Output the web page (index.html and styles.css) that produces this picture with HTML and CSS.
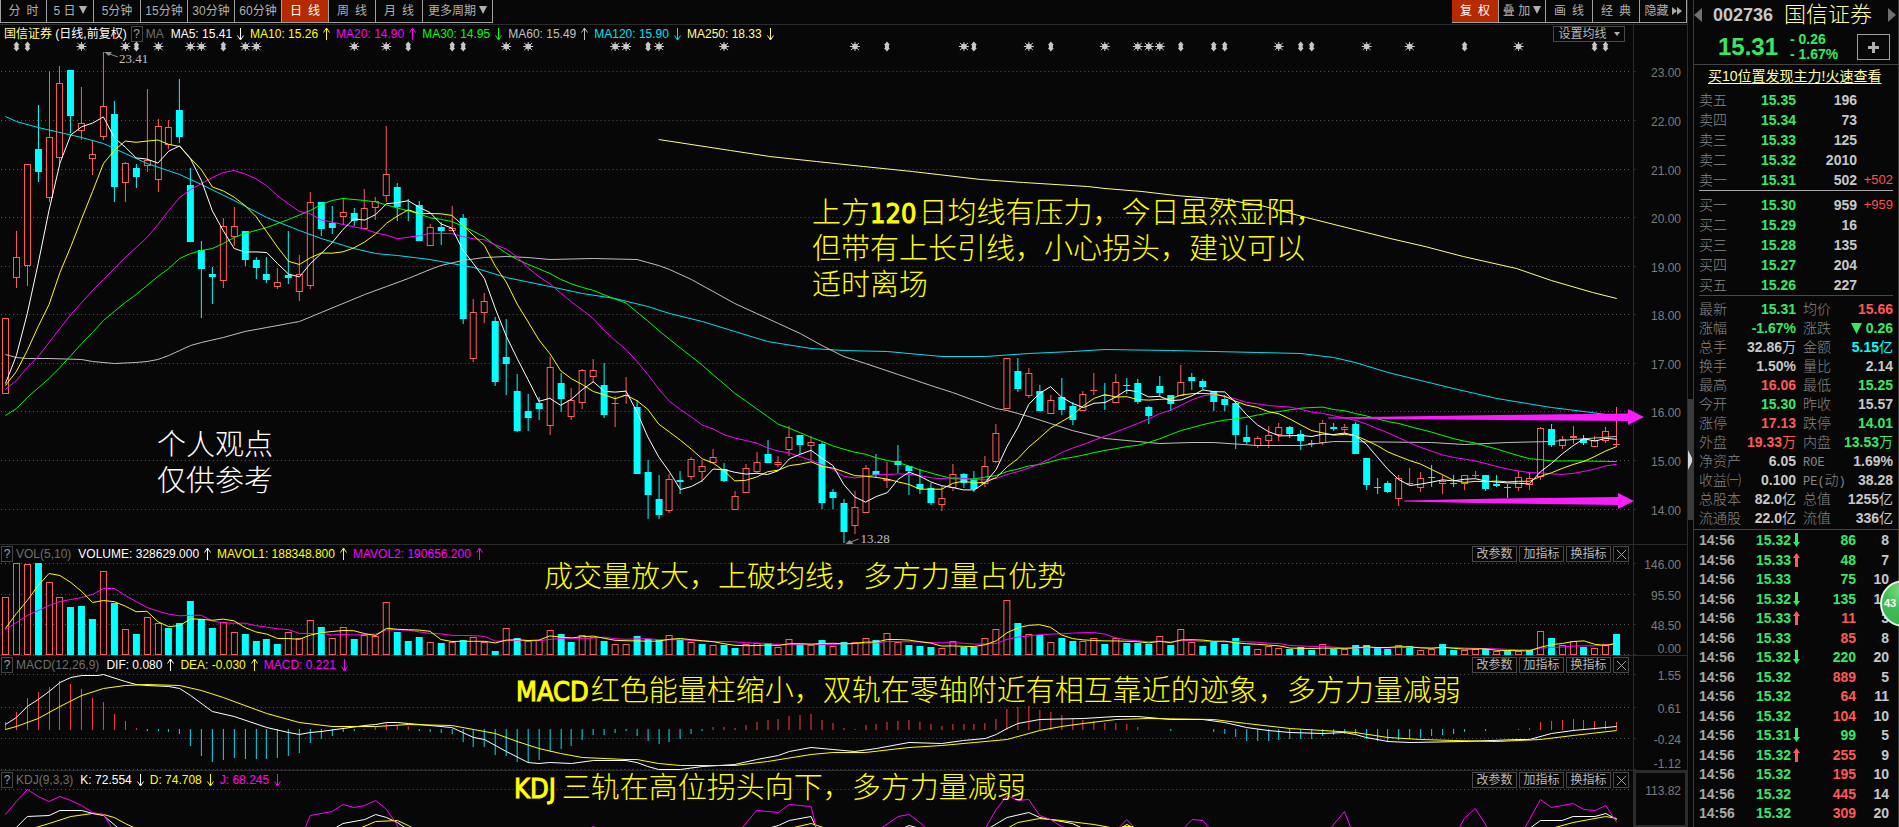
FILE: index.html
```html
<!DOCTYPE html>
<html lang="zh-CN">
<head>
<meta charset="utf-8">
<title>国信证券 002736</title>
<link rel="stylesheet" href="styles.css">
</head>
<body>
<svg class="defs" aria-hidden="true">
  <symbol id="up" viewBox="0 0 7 14"><path d="M3.5 13V2M.5 5.500L3.500 1L6.500 5.500"/></symbol>
  <symbol id="down" viewBox="0 0 7 14"><path d="M3.500 1V12M.5 8.500L3.500 13L6.500 8.500"/></symbol>
  <symbol id="tick-up" viewBox="0 0 7 14"><path d="M3.500 0L7 5H5V14H2V5H0Z"/></symbol>
  <symbol id="tick-down" viewBox="0 0 7 14"><path d="M2 0H5V9H7L3.500 14L0 9H2Z"/></symbol>
  <symbol id="cross" viewBox="0 0 12 12"><path d="M1 1L11 11M11 1L1 11"/></symbol>
  <symbol id="drop" viewBox="0 0 10 10"><path d="M0 0H10L5 10Z"/></symbol>
</svg>
<div class="app">
  <main class="chart">
    <nav class="toolbar">
      <button class="tab">分&ensp;时</button><button class="tab">5 日<svg class="drop"><use href="#drop"/></svg></button><button class="tab">5分钟</button><button class="tab">15分钟</button><button class="tab">30分钟</button><button class="tab">60分钟</button><button class="tab active">日&ensp;线</button><button class="tab">周&ensp;线</button><button class="tab">月&ensp;线</button><button class="tab wide">更多周期<svg class="drop"><use href="#drop"/></svg></button>
      <span class="spacer"></span>
      <button class="tab active">复&ensp;权</button><button class="tab">叠 加<svg class="drop"><use href="#drop"/></svg></button><button class="tab">画&ensp;线</button><button class="tab">经&ensp;典</button><button class="tab">隐藏<svg class="ff" viewBox="0 0 10 8"><path d="M0 0L5 4L0 8ZM5 0L10 4L5 8Z"/></svg></button>
    </nav>

    <section class="panel">
      <div class="plot">
        <header class="legend">
          <span class="stock">国信证券</span>&nbsp;<span class="white">(日线,前复权)</span>
          <button class="help">?</button><span class="name ma">MA</span>
          <span class="item white">MA5: 15.41<svg><use href="#down"/></svg></span>
          <span class="item yellow">MA10: 15.26<svg><use href="#up"/></svg></span>
          <span class="item magenta">MA20: 14.90<svg><use href="#up"/></svg></span>
          <span class="item green">MA30: 14.95<svg><use href="#down"/></svg></span>
          <span class="item silver">MA60: 15.49<svg><use href="#up"/></svg></span>
          <span class="item cyan">MA120: 15.90<svg><use href="#down"/></svg></span>
          <span class="item cream">MA250: 18.33<svg><use href="#down"/></svg></span>
          <span class="spacer"></span>
          <button class="tool average">设置均线<svg class="caret" viewBox="0 0 6 4"><path d="M0 0H6L3 4Z"/></svg></button>
        </header>
        <svg id="price" class="canvas price" viewBox="0 43 1634 501" preserveAspectRatio="none"></svg>
        <p class="note opinion">个人观点<br>仅供参考</p>
        <p class="note advice">上方<b>120</b>日均线有压力，今日虽然显阳，<br>但带有上长引线，小心拐头，建议可以<br>适时离场</p>
      </div>
      <svg id="price-axis" class="axis" viewBox="0 25 53 519"></svg>
    </section>

    <section class="panel">
      <div class="plot">
        <header class="legend">
          <button class="help">?</button><span class="name">VOL(5,10)</span>
          <span class="item white">VOLUME: 328629.000<svg><use href="#up"/></svg></span>
          <span class="item yellow">MAVOL1: 188348.800<svg><use href="#up"/></svg></span>
          <span class="item magenta">MAVOL2: 190656.200<svg><use href="#up"/></svg></span>
          <span class="spacer"></span>
          <button class="tool">改参数</button><button class="tool">加指标</button><button class="tool">换指标</button><button class="tool close" aria-label="关闭"><svg><use href="#cross"/></svg></button>
        </header>
        <svg id="volume" class="canvas volume" viewBox="0 563 1634 92" preserveAspectRatio="none"></svg>
        <p class="note volume-note">成交量放大，上破均线，多方力量占优势</p>
      </div>
      <svg id="volume-axis" class="axis" viewBox="0 545 53 110"></svg>
    </section>

    <section class="panel">
      <div class="plot">
        <header class="legend">
          <button class="help">?</button><span class="name">MACD(12,26,9)</span>
          <span class="item white">DIF: 0.080<svg><use href="#up"/></svg></span>
          <span class="item yellow">DEA: -0.030<svg><use href="#up"/></svg></span>
          <span class="item magenta">MACD: 0.221<svg><use href="#down"/></svg></span>
          <span class="spacer"></span>
          <button class="tool">改参数</button><button class="tool">加指标</button><button class="tool">换指标</button><button class="tool close" aria-label="关闭"><svg><use href="#cross"/></svg></button>
        </header>
        <svg id="macd" class="canvas macd" viewBox="0 674 1634 96" preserveAspectRatio="none"></svg>
        <p class="note macd-note"><b>MACD</b>红色能量柱缩小，双轨在零轴附近有相互靠近的迹象，多方力量减弱</p>
      </div>
      <svg id="macd-axis" class="axis" viewBox="0 656 53 114"></svg>
    </section>

    <section class="panel last">
      <div class="plot">
        <header class="legend">
          <button class="help">?</button><span class="name">KDJ(9,3,3)</span>
          <span class="item white">K: 72.554<svg><use href="#down"/></svg></span>
          <span class="item yellow">D: 74.708<svg><use href="#down"/></svg></span>
          <span class="item magenta">J: 68.245<svg><use href="#down"/></svg></span>
          <span class="spacer"></span>
          <button class="tool">改参数</button><button class="tool">加指标</button><button class="tool">换指标</button><button class="tool close" aria-label="关闭"><svg><use href="#cross"/></svg></button>
        </header>
        <svg id="kdj" class="canvas kdj" viewBox="0 789 1634 38" preserveAspectRatio="none"></svg>
        <p class="note kdj-note"><b>KDJ</b>三轨在高位拐头向下，多方力量减弱</p>
      </div>
      <svg id="kdj-axis" class="axis selected" viewBox="0 771 53 56"></svg>
    </section>
  </main>

  <div class="splitter"><button class="grip" aria-label="收起"><svg viewBox="0 0 4 20"><path d="M0 0L4 8V12L0 20Z"/></svg></button></div>

  <aside class="quote">
    <header class="title">
      <button class="step" aria-label="上一只"><svg viewBox="0 0 8 14"><path d="M8 0V14L0 7Z"/></svg></button>
      <span class="code">002736</span><span class="company">国信证券</span>
      <button class="step next" aria-label="下一只"><svg viewBox="0 0 8 14"><path d="M0 0V14L8 7Z"/></svg></button>
    </header>
    <div class="last-price">
      <strong>15.31</strong>
      <span class="change">- 0.26<br>- 1.67%</span>
      <button class="add" aria-label="加自选"><svg viewBox="0 0 11 11"><path d="M4 0H7V4H11V7H7V11H4V7H0V4H4Z"/></svg></button>
    </div>
    <div class="promo"><a href="#">买10位置发现主力!火速查看</a></div>
    <table class="book asks">
      <tr><th>卖五</th><td class="dn">15.35</td><td>196</td><td></td></tr>
      <tr><th>卖四</th><td class="dn">15.34</td><td>73</td><td></td></tr>
      <tr><th>卖三</th><td class="dn">15.33</td><td>125</td><td></td></tr>
      <tr><th>卖二</th><td class="dn">15.32</td><td>2010</td><td></td></tr>
      <tr><th>卖一</th><td class="dn">15.31</td><td>502</td><td class="delta">+502</td></tr>
    </table>
    <table class="book bids">
      <tr><th>买一</th><td class="dn">15.30</td><td>959</td><td class="delta">+959</td></tr>
      <tr><th>买二</th><td class="dn">15.29</td><td>16</td><td></td></tr>
      <tr><th>买三</th><td class="dn">15.28</td><td>135</td><td></td></tr>
      <tr><th>买四</th><td class="dn">15.27</td><td>204</td><td></td></tr>
      <tr><th>买五</th><td class="dn">15.26</td><td>227</td><td></td></tr>
    </table>
    <table class="stats">
      <tr><th>最新</th><td class="dn">15.31</td><th>均价</th><td class="upc">15.66</td></tr>
      <tr><th>涨幅</th><td class="dn">-1.67%</td><th>涨跌</th><td class="dn"><svg class="fall"><use href="#drop"/></svg>0.26</td></tr>
      <tr><th>总手</th><td>32.86<i>万</i></td><th>金额</th><td class="aqua">5.15<i>亿</i></td></tr>
      <tr><th>换手</th><td>1.50%</td><th>量比</th><td>2.14</td></tr>
      <tr><th>最高</th><td class="upc">16.06</td><th>最低</th><td class="dn">15.25</td></tr>
      <tr><th>今开</th><td class="dn">15.30</td><th>昨收</th><td>15.57</td></tr>
      <tr><th>涨停</th><td class="upc">17.13</td><th>跌停</th><td class="dn">14.01</td></tr>
      <tr><th>外盘</th><td class="upc">19.33<i>万</i></td><th>内盘</th><td class="dn">13.53<i>万</i></td></tr>
      <tr><th>净资产</th><td>6.05</td><th><span class="latin">ROE</span></th><td>1.69%</td></tr>
      <tr><th>收益㈠</th><td>0.100</td><th><span class="latin">PE(</span>动<span class="latin">)</span></th><td>38.28</td></tr>
      <tr><th>总股本</th><td>82.0<i>亿</i></td><th>总值</th><td>1255<i>亿</i></td></tr>
      <tr><th>流通股</th><td>22.0<i>亿</i></td><th>流值</th><td>336<i>亿</i></td></tr>
    </table>
    <table class="ticks">
      <tr><th>14:56</th><td>15.32<svg><use href="#tick-down"/></svg></td><td class="dn">86</td><td>8</td></tr>
      <tr><th>14:56</th><td>15.33<svg class="upc"><use href="#tick-up"/></svg></td><td class="dn">48</td><td>7</td></tr>
      <tr><th>14:56</th><td>15.33</td><td class="dn">75</td><td>10</td></tr>
      <tr><th>14:56</th><td>15.32<svg><use href="#tick-down"/></svg></td><td class="dn">135</td><td>10</td></tr>
      <tr><th>14:56</th><td>15.33<svg class="upc"><use href="#tick-up"/></svg></td><td class="upc">11</td><td>3</td></tr>
      <tr><th>14:56</th><td>15.33</td><td class="upc">85</td><td>8</td></tr>
      <tr><th>14:56</th><td>15.32<svg><use href="#tick-down"/></svg></td><td class="dn">220</td><td>20</td></tr>
      <tr><th>14:56</th><td>15.32</td><td class="upc">889</td><td>5</td></tr>
      <tr><th>14:56</th><td>15.32</td><td class="upc">64</td><td>11</td></tr>
      <tr><th>14:56</th><td>15.32</td><td class="upc">104</td><td>10</td></tr>
      <tr><th>14:56</th><td>15.31<svg><use href="#tick-down"/></svg></td><td class="dn">99</td><td>5</td></tr>
      <tr><th>14:56</th><td>15.32<svg class="upc"><use href="#tick-up"/></svg></td><td class="upc">255</td><td>9</td></tr>
      <tr><th>14:56</th><td>15.32</td><td class="upc">195</td><td>10</td></tr>
      <tr><th>14:56</th><td>15.32</td><td class="upc">445</td><td>14</td></tr>
      <tr><th>14:56</th><td>15.32</td><td class="upc">309</td><td>20</td></tr>
    </table>
    <div class="badge">43</div>
  </aside>
</div>
<script src="chart.js"></script>
</body>
</html>
```
FILE: styles.css
```css
* { box-sizing: border-box; }
body {
  margin: 0;
  background: #070707;
  color: #c8c8c8;
  font: 12px/16px "Liberation Sans", "Noto Sans CJK SC", sans-serif;
  overflow: hidden;
}
button {
  margin: 0;
  padding: 0;
  border: 0;
  background: none;
  color: inherit;
  font: inherit;
}
.defs { position: absolute; width: 0; height: 0; }
.app {
  position: relative;
  display: grid;
  grid-template-columns: minmax(0, 1fr) 5px 206px;
  min-height: 100vh;
  overflow: hidden;
}
.spacer { flex: 1; }

.white { color: #fff; }
.yellow { color: #ff0; }
.magenta { color: #f0f; }
.green { color: #0f0; }
.silver { color: #c0c0c0; }
.cyan { color: #00e0f0; }
.cream { color: #ffff90; }

/* toolbar */
.chart { display: flex; flex-direction: column; border-right: 1px solid #2c2c2c; }
.toolbar { display: flex; height: 24px; }
.tab {
  width: 47px;
  height: 23px;
  border-right: 1px solid #a0a0a0;
  border-bottom: 1px solid #a0a0a0;
  color: #b0b0b0;
  white-space: nowrap;
}
.tab.wide { width: 70px; }
.tab.active { background: #b62a00; color: #fff; }
.tab:first-child { border-left: 1px solid #a0a0a0; }
.drop { width: 8px; height: 10px; margin-left: 3px; fill: currentColor; }
.ff { width: 10px; height: 8px; margin-left: 3px; fill: #a8a8a8; }

/* chart panels */
.panel {
  display: grid;
  grid-template-columns: minmax(0, 1fr) 53px;
  border-top: 1px solid #2c2c2c;
}
.plot { position: relative; min-width: 0; border-right: 1px solid #2c2c2c; }
.legend {
  display: flex;
  align-items: center;
  height: 18px;
  padding: 0 4px 0 1px;
  white-space: nowrap;
}
.stock { padding-left: 3px; color: #ffff90; }
.help {
  width: 12px;
  height: 16px;
  margin-right: 3px;
  border: 1px solid #444;
  color: #a0a0a0;
  line-height: 14px;
}
.stock ~ .help { margin-left: 4px; }
.name { margin-right: 7px; color: #707070; }
.name.ma { margin-right: 7px; }
.item { display: flex; align-items: center; margin-right: 6px; }
.item svg { width: 7px; height: 14px; margin-left: 5px; fill: none; stroke: currentColor; }
.tool {
  width: 45px;
  height: 16px;
  margin-left: 2px;
  border: 1px solid #484848;
  color: #b8b8b8;
  line-height: 14px;
}
.tool.average { width: 72px; margin-right: 4px; }
.caret { width: 6px; height: 4px; margin: 0 0 2px 7px; fill: #b0b0b0; }
.tool.close { display: grid; place-items: center; width: 16px; }
.close svg { width: 11px; height: 11px; fill: none; stroke: #b0b0b0; }
.canvas { display: block; width: 100%; overflow: visible; }
.price { height: 501px; }
.volume { height: 92px; }
.macd { height: 96px; }
.kdj { height: 38px; }
.axis { display: block; width: 53px; height: 100%; }
.axis.selected { box-shadow: inset 0 0 0 2px #2c2c2c; }
.axis text { fill: #7c7c7c; font-size: 12px; text-anchor: end; }
.canvas text { fill: #c0c0c0; font: 13px "Liberation Serif", serif; }

/* handwritten remarks over the charts */
.note {
  position: absolute;
  margin: 0;
  color: #ff0;
  font-family: "Noto Sans CJK SC", sans-serif;
  font-size: 29px;
  font-weight: 300;
  line-height: 36px;
  white-space: nowrap;
}
.note b { padding-right: 2px; font: 27px/20px "DejaVu Sans Condensed", "DejaVu Sans", sans-serif; -webkit-text-stroke: 1px; }
.opinion { left: 157px; top: 399px; color: #fff; }
.advice { left: 812px; top: 167px; }
.volume-note { left: 544px; top: 11px; }
.macd-note { left: 516px; top: 14px; }
.kdj-note { left: 514px; top: -4px; }
.kdj-note b { padding-right: 6px; }

.splitter { display: flex; align-items: flex-start; padding-top: 399px; }
.grip { display: grid; place-items: center start; width: 5px; height: 121px; background: #3a3a3a; }
.grip svg { width: 4px; height: 20px; fill: #d8d8d8; }

/* quote sidebar */
.quote {
  display: flex;
  flex-direction: column;
  border: solid #3c3c3c;
  border-width: 0 1px;
  font-size: 14px;
}
.title { display: flex; align-items: center; gap: 11px; height: 30px; padding-right: 2px; }
.step svg { display: block; width: 8px; height: 14px; fill: #707070; }
.step.next { margin-left: auto; }
.code { font-size: 18px; font-weight: 700; }
.company { color: #ffffa0; font-size: 22px; font-weight: 300; white-space: nowrap; }
.last-price { display: flex; align-items: center; height: 35px; padding: 0 8px 0 24px; border-bottom: 1px solid #444; color: #37e866; }
.last-price strong { width: 72px; font-size: 24px; }
.change { flex: 1; font-weight: 700; line-height: 15px; }
.add { display: grid; place-items: center; width: 33px; height: 26px; border: 1px solid #a0a0a0; }
.add svg { width: 11px; height: 11px; fill: #b0b0b0; }
.promo { padding: 1px 0 0 14px; height: 25px; line-height: 20px; white-space: nowrap; }
.promo a { color: #ffffa0; text-underline-offset: 2px; }
table { width: 194px; margin: 0 5px; border-collapse: collapse; table-layout: fixed; line-height: 18px; }
th { padding: 0; color: #888; font-weight: 300; text-align: left; white-space: nowrap; }
td { padding: 0; font-weight: 700; text-align: right; white-space: nowrap; }
td i { font-style: normal; font-weight: 400; }
.dn { color: #37e866; }
.upc { color: #ff5858; }
.aqua { color: #0ff; }
.book tr { height: 20px; }
.book th { width: 42px; }
.book td { width: 55px; }
.book td:nth-child(3) { width: 61px; }
.book td:nth-child(4) { width: 36px; }
.book .delta { color: #ff5050; font-size: 13px; font-weight: 400; }
.asks { border-bottom: 1px solid #a8a8a8; }
.asks, .bids { border-collapse: separate; border-spacing: 0; }
.bids { margin-top: 4px; border-bottom: 1px solid #484848; }
.stats { margin-top: 3px; }
.stats tr { height: 19px; }
.stats th { width: 42px; }
.stats td { width: 55px; }
.stats th:nth-child(3) { width: 46px; padding-left: 7px; }
.stats td:nth-child(4) { width: 51px; }
.fall { width: 11px; height: 11px; margin-right: 4px; vertical-align: -1px; fill: currentColor; }
.latin { font: 12px "Liberation Mono", monospace; }
.ticks { width: 100%; margin: 2px 0 0; border-top: 1px solid #444; border-collapse: separate; border-spacing: 0; }
.ticks tr { height: 20px; }
.ticks tr:nth-child(even) { height: 19px; }
.ticks th { width: 62px; padding-left: 5px; color: #a8a8a8; font-weight: 700; }
.ticks td { width: 48px; }
.ticks td:nth-child(2) { width: 52px; color: #37e866; text-align: left; }
.ticks td:last-child { width: 42px; padding-right: 9px; }
.ticks svg { width: 7px; height: 14px; margin-left: 2px; vertical-align: -2px; fill: currentColor; }
.badge {
  position: absolute;
  top: 580px;
  right: -28px;
  width: 47px;
  height: 47px;
  padding-left: 2px;
  border: 2px solid #e8f4e8;
  border-radius: 50%;
  background: radial-gradient(circle at 50% 20%, #8be08b, #3fbf55 45%, #35b04c);
  color: #fff;
  font: 700 11px/43px "Liberation Sans", sans-serif;
}
```
FILE: chart.js
```js
const RED = '#ff5c5c', AQUA = '#00ffff';
const STEP = 10.893, FIRST = 5.5;
const xOf = i => FIRST + i * STEP;
const mid = v => Math.floor(v) + 0.5;

// Each entry: kind (r rising, c falling), high, body top, body bottom, low.
const candles = `r318 318 394 394,r231 257 278 288,r164 164 266 286,c105 149 172 182,r71 137 198 202,r66 83 158 164,c70 70 116 133,r87 123 131 140,r141 154 159 175,r52 106 137 140,
c101 114 187 202,r162 163 183 202,c164 168 177 188,r89 160 166 172,r119 126 180 192,r120 127 145 149,c79 110 137 143,c168 185 242 242,c241 250 269 318,c267 274 277 304,
r218 226 281 288,r207 226 237 246,c231 231 260 266,c257 260 268 279,c257 274 280 283,r268 282 287 289,c231 275 278 284,r255 274 292 301,r192 202 286 289,c202 202 229 236,
c206 223 228 234,r198 212 217 225,c208 213 221 226,r189 208 229 229,r197 201 208 220,r126 174 196 202,c183 187 207 221,c199 210 211 221,c201 205 241 241,r224 227 246 246,
c222 227 231 245,r206 228 231 231,c214 218 319 324,r299 312 359 362,r293 301 313 323,c317 321 382 386,c319 357 364 395,c374 391 431 432,c394 411 418 431,c397 403 409 420,
r357 367 426 435,c373 383 399 412,r388 400 417 420,r369 370 403 409,r359 370 377 383,c363 385 415 418,r396 403 403 427,r377 395 395 404,c400 407 474 474,c460 472 495 519,
c475 499 515 519,r474 479 511 513,c471 480 482 494,r457 459 477 480,r460 466 472 482,r449 457 463 463,c463 469 481 482,r491 496 510 510,r464 468 493 493,r452 462 472 474,
c440 454 463 463,r456 462 465 467,r426 437 450 456,c435 435 445 454,r436 442 446 460,c442 444 503 509,c489 492 498 509,c499 503 532 543,r491 507 526 534,r465 468 513 513,
c454 471 475 478,r462 479 481 488,c445 461 465 473,c466 466 471 495,c469 484 489 494,c483 488 503 505,r486 498 505 511,r464 474 488 491,c473 474 483 488,c471 479 489 492,
r456 466 484 487,r424 433 462 463,r358 358 409 409,c358 371 389 392,r368 373 396 398,c385 391 411 411,r395 400 414 414,c378 397 410 415,c402 406 420 425,r391 394 411 411,
r373 390 391 395,c383 395 396 410,r374 382 403 403,c378 385 386 394,c379 383 402 404,c406 407 416 424,c376 386 393 397,c395 395 404 411,r365 382 396 396,c373 377 381 390,
c379 381 387 390,c391 391 402 411,c395 399 405 411,c401 403 435 449,c425 437 442 444,r436 438 446 448,r426 435 441 448,r423 427 435 441,c426 427 434 438,c430 434 441 450,
c440 443 443 447,r420 423 443 445,c423 427 429 431,r424 427 430 434,c422 424 454 454,c458 458 485 490,c478 487 487 494,c481 483 492 493,r475 478 499 506,r468 483 483 485,
r472 478 488 492,c465 477 477 487,r475 481 484 494,c475 483 483 487,r475 475 484 490,r471 475 475 478,c475 475 489 491,c475 484 486 487,c484 487 487 498,r471 477 488 491,
r472 478 485 490,r427 428 477 480,c424 429 445 447,r436 439 446 449,r426 436 438 444,c435 439 443 445,r436 440 447 447,r427 431 441 443,r407 444 444 447`
  .replace(/\n/g, '').split(',').map(s => [s[0], ...s.slice(1).split(' ').map(Number)]);

const volumes = `r597 r563 r564 c563 r582 r597 c607 c606 c619 r571 c603 r629 c634 r617 r623 c628 c623 c601 c619 c628 r622 r632 c634 c641 c639 c644 r632 r638 r620 c627 r638 r627 c639 r635 r636 r602 c632 c641 c637 r642 c643 r642 c640 r637 r642 c651 r628 c638 r641 r640 r630 c634 c642 r635 r637 c641 r644 r644 c636 c639 c640 r635 c640 r642 c644 r645 c645 c648 r644 r643 c643 r647 r639 c644 r645 c640 r646 c642 r642 r638 c640 r633 r642 c645 c646 c647 r648 r641 c647 c647 r638 r629 r600 c623 r634 c635 r642 c638 c641 r641 r638 c644 r638 c643 c643 c644 r636 c645 r629 r642 c646 c642 c644 c638 c646 r649 r646 r648 c649 c647 c650 r644 c649 r649 c645 c645 c647 c649 r645 c646 r650 r649 c644 c650 r650 r649 c649 r651 c651 r651 c650 r631 c638 r645 r641 c647 r648 r644 c634`
  .split(' ').map(s => [s[0], +s.slice(1)]);

const ZERO = 730;
const macdBars = [8,18,32,38,43,49,46,41,32,28,16,9,2,-1,-1,-2,-4,-16,-26,-32,-30,-28,-29,-29,-29,-28,-26,-23,-13,-9,-6,-2,-1,1,3,7,5,4,-1,-2,-3,-4,-12,-17,-17,-25,-26,-32,-32,-30,-22,-19,-16,-10,-5,-5,-3,-1,-6,-11,-14,-12,-9,-4,-1,3,3,2,5,8,10,11,14,15,16,10,7,2,1,5,6,8,9,10,8,6,4,6,6,6,7,11,21,23,24,20,18,15,11,10,9,7,7,6,3,0,0,-1,0,0,0,-2,-4,-7,-11,-11,-11,-10,-9,-9,-9,-6,-5,-4,-4,-9,-11,-12,-10,-9,-8,-6,-5,-4,-2,0,-1,0,0,1,2,8,9,10,11,10,9,9,8];

// Polyline points as index,level pairs.
const pts = s => s.split(' ').map(p => p.split(',').map(Number));

function average(values, n, lead) {
  const out = pts(lead);
  for (let i = Math.max(n - 1, out[out.length - 1][0] + 1); i < values.length; i++) {
    let sum = 0;
    for (let k = 0; k < n; k++) sum += values[i - k];
    out.push([i, sum / n]);
  }
  return out;
}

const el = {};
for (const id of ['price', 'volume', 'macd', 'kdj']) {
  el[id] = '';
  el[id + '-axis'] = '';
}
const line = (id, x1, y1, x2, y2, color, extra = '') => {
  el[id] += `<line x1="${x1}" y1="${y1}" x2="${x2}" y2="${y2}" stroke="${color}" ${extra}/>`;
};
const rect = (id, x, y, w, h, color, hollow) => {
  el[id] += hollow
    ? `<rect x="${x + 0.5}" y="${y + 0.5}" width="${w - 1}" height="${Math.max(h - 1, 1)}" fill="#070707" stroke="${color}"/>`
    : `<rect x="${x}" y="${y}" width="${w}" height="${h}" fill="${color}"/>`;
};
const curve = (id, points, color) => {
  el[id] += `<polyline fill="none" stroke="${color}" shape-rendering="crispEdges" points="${points.map(([i, y]) => `${xOf(i).toFixed(1)},${(y + 0.5).toFixed(1)}`).join(' ')}"/>`;
};

const grid = {
  price: [71, 120, 169, 217, 266, 314, 363, 411, 460, 509].map((y, i) => [y, `${23 - i}.00`]),
  volume: [[563, '146.00'], [594, '95.50'], [624, '48.50'], [654, '0.00', 648]],
  macd: [[674, '1.55'], [707, '0.61'], [738, '-0.24'], [769, '-1.12', 763]],
  kdj: [[789, '113.82']],
};
for (const [id, rows] of Object.entries(grid)) {
  for (const [y, label, at] of rows) {
    line(id, 1, y + 0.5, 1630, y + 0.5, '#585858', 'stroke-dasharray="1 3"');
    line(id + '-axis', 0, y + 0.5, 2, y + 0.5, '#2c2c2c');
    el[id + '-axis'] += `<text x="47" y="${(at || y + 1) + 5}">${label}</text>`;
  }
}

candles.forEach(([kind, high, top, bottom, low], i) => {
  const x = Math.floor(xOf(i)), color = kind === 'r' ? RED : AQUA;
  if (bottom - top < 2) {
    line('price', x + 0.5, high, x + 0.5, low, color);
    line('price', x - 3, top + 0.5, x + 4, top + 0.5, color);
    return;
  }
  line('price', x + 0.5, high, x + 0.5, top, color);
  line('price', x + 0.5, bottom, x + 0.5, low, color);
  rect('price', x - 3, top, 7, bottom - top, color, kind === 'r');
});

volumes.forEach(([kind, top], i) => {
  rect('volume', Math.floor(xOf(i)) - 3, top, 7, 655 - top, kind === 'r' ? RED : AQUA, kind === 'r');
});

macdBars.forEach((v, i) => {
  const x = Math.floor(xOf(i)) + 0.5;
  if (v) line('macd', x, v > 0 ? ZERO : ZERO - 1, x, ZERO - v, v > 0 ? '#ff3c3c' : '#00e0f0');
});

const closes = candles.map(c => (c[0] === 'r' ? c[2] : c[3]));
curve('price', pts('0,116 1,121 3,127 5,132 7,137 9,143 11,153 13,163 16,174 18,184 21,200 24,217 27,230 29,238 32,248 34,253 36,255 39,259 43,267 46,277 50,286 53,293 56,298 59,306 61,313 64,321 67,331 70,341 74,348 77,350 81,351 84,354 86,356 90,356 94,353 98,351 101,349 107,350 115,352 119,353 122,357 124,362 127,372 130,380 133,388 137,398 142,407 145,411 147,414 148,415'), '#00e0f0');
curve('price', pts('0,354 1,357 2,358 4,358 7,359 8,361 10,363 12,362 13,361 14,359 15,355 16,350 17,345 18,342 20,337 22,331 24,327 26,323 27,321 29,312 31,303 33,294 35,286 37,278 39,269 40,265 42,260 44,257 46,256 48,257 50,259 54,258 58,259 59,262 60,265 61,269 63,279 65,291 67,303 69,313 71,323 73,333 75,345 77,356 79,363 82,374 85,385 87,392 89,400 91,408 92,410 94,416 96,423 98,430 101,438 103,440 106,443 109,442 111,442 115,445 119,445 122,441 131,442 134,444 138,442 142,441 144,439 148,436'), '#c0c0c0');
curve('price', average(closes, 30, '0,415 1,408 2,397 4,378 5,367 6,355 7,343 8,332 9,320 10,311 11,302 12,294 13,285 14,276 15,268 16,258 17,253 18,250 19,248 20,243 21,237 22,233 24,227 26,219 28,210 29,204 30,200 31,198 32,199 33,200'), '#00ff00');
curve('price', average(closes, 20, '0,389 1,380 2,367 3,356 4,342 5,328 6,314 7,302 8,290 9,279 10,268 11,257 12,247 13,237 14,224 15,210 16,197 17,189 18,183 19,177 20,172 21,170'), '#ff00ff');
curve('price', average(closes, 10, '0,385 1,371 2,350 3,326 4,304 5,272 6,246 7,218 8,191'), '#ffff00');
curve('price', average(closes, 5, '0,383 1,355 2,313 3,263'), '#ffffff');
curve('price', pts('60,139 66.6,150 70.2,156 74.5,161 78.8,166 83.3,171 89.6,179 93.5,182 99.4,186 101,188 104.4,191 107.5,195 112,199 115.3,205 119.5,217 125,232 127.2,238 130.4,246 133.9,256 138.8,268 142,280 145.8,292 148,298'), '#ffff80');

// Event markers above the candles.
for (const i of [7, 11, 14, 17, 18, 22, 23, 32, 35, 46, 48, 56, 57, 60, 66, 78, 88, 94, 101, 104, 105, 106, 117, 125, 129, 139]) {
  const x = mid(xOf(i));
  el.price += `<path d="M${x} 42V51M${x - 5} 46.500H${x + 5}M${x - 4} 43L${x + 4} 50M${x + 4} 43L${x - 4} 50" stroke="#c8c8c8"/><circle cx="${x}" cy="46.500" r="2.800" fill="#c8c8c8"/>`;
}
for (const i of [1, 2, 12, 20, 37, 41, 42, 59, 81, 89, 96, 108, 111, 112, 119, 120, 134, 146, 147]) {
  const x = mid(xOf(i));
  el.price += `<path d="M${x} 41.500L${x + 3} 45H${x + 2}V48H${x + 3}L${x} 51.500L${x - 3} 48H${x - 2}V45H${x - 3}Z" fill="#c8c8c8"/>`;
}

el.price += `
  <path d="M118 57L107 53" stroke="#909090"/><path d="M104 52L112 52L109 56Z" fill="#909090"/>
  <text x="119" y="63">23.41</text>
  <path d="M859 539L849 543" stroke="#909090"/><path d="M846 544L850 540L854 544Z" fill="#909090"/>
  <text x="861" y="543">13.28</text>
  <path d="M1329 417.500L1500 415L1629 413.500V409L1645 417L1629 425V421L1500 420L1329 418.500Z" fill="#fa1cfa"/>
  <path d="M1405 500.500L1500 498.500L1619 497V493L1635 501L1619 509V505L1500 503.500L1405 501.500Z" fill="#fa1cfa"/>`;

const levels = volumes.map(v => v[1]);
curve('volume', average(levels, 10, '0,629 1,622 2,615 3,610 4,605 5,601 6,599 7,597 8,594 9,588 10,588 11,595 12,601 13,607'), '#ff00ff');
curve('volume', average(levels, 5, '0,628 1,613 2,600 3,585 4,573 5,575 6,582 7,591 8,602'), '#ffff00');

curve('macd', pts('0,724 1,717 2,706 3,699 4,691 5,682 6,677 7,675 8.5,675 9,674 11,681 12,684 13,685 15,686 16,688 17,695 19,711 21,716 24,727 26,732 27,734 28,732 29,731 31,728 33,725 34,724 35,722 36,722 37,723 39,725 41,727 42,732 43,737 44,739 46,751 48,762 49,763 50,762 52,763 54,760 57,760 58,762 59,766 60,769 62,769 64,766 67,764 69,759 71,755 72,751 74,747 76,749 78,751 80,748 83,742 86,743 88,740 90,738 91,734 92,728 93,723 94,721 95,719 99,718 102,716 104,716 107,719 110,719 112,722 114,727 116,730 118,732 121,733 123,732 124,734 125,737 127,741 129,742 134,741 139,739 140,739 142,733 144,730 146,728 147,727 148,726'), '#ffffff');
curve('macd', pts('0,729 1,726 3,718 5,706 7,695 9,688 11,685 13,684 16,685 18,690 20,697 22,705 24,713 27,722 30,726 34,726 37,724 41,725 43,729 45,733 47,741 49,748 51,753 53,757 57,759 58,759 60,763 62,765 67,765 70,761 74,754 76,752 79,752 83,747 86,745 89,742 92,739 95,730 97,726 99,723 102,719 105,718 111,719 114,723 118,728 121,730 124,732 127,737 130,739 133,740 137,741 141,739 144,735 148,730'), '#ffff00');

const kdj = {
  '#ffffff': '0.9,828 2,816 4,815 5,810 7,810 8,813 9,815 10.4,828|30.2,828 31,823 33,819 34,814 35,817 36,822 36.8,828|70,828 71,825 72,820 74,816 74.5,828|82.4,828 83,825 84,828|90.3,828 92,817 94,812 95,817 98,823 99,828|102.4,828 103,824 103.8,828|140,828 141,820 143,820 144,816 146,816 147,813 148,819',
  '#ffff00': '2.5,828 4,823 6,816 8,813 9,814 10,817 11,823 12,828|32.5,828 34,821 36,820 37,825 37.5,828|72,828 74,823 75.4,828|92,828 93,822 95,818 97,820 100,824 102,828|102.6,826 103.6,826|142,828 144,822 147,816 148,818',
  '#ff00ff': '0,814 1,801 2,789 3,796 4,801 5,796 6,800 7,805 8,812 9,814 9.8,828|27.5,828 28,815 30,811 31,804 32,807 33,805 34,800 35,809 36.2,828|53.6,828 54,826 54.4,828|67.6,828 69,810 71,812 72,804 73,805 74,806 74.5,828|80.4,828 82,816 83,814 84,822 84.6,828|90,828 91,809 92,795 93,800 94,799 95,815 96,819 97,826 97.500,828|102.2,828 103,819 103.8,828|108.2,828 109,819 110,820 110.6,828|121.7,828 123,811 123.6,828|133.5,828 134,818 135,808 136.2,828|139.5,828 140,819 141,799 142,807 144,803 145,809 146,810 147,805 148,822',
};
for (const [color, runs] of Object.entries(kdj)) {
  for (const run of runs.split('|')) curve('kdj', pts(run), color);
}

for (const [id, markup] of Object.entries(el)) document.getElementById(id).innerHTML = markup;
```
